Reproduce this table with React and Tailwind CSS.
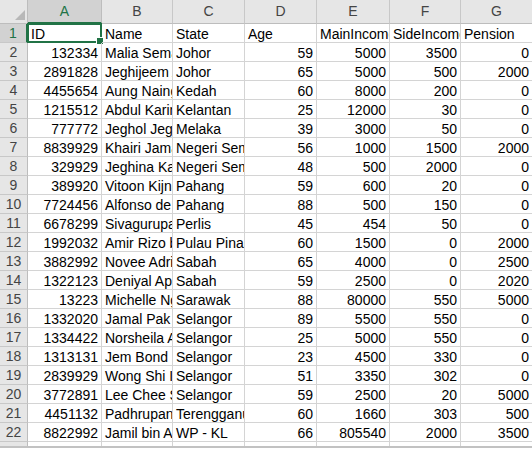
import React from "react";

// Sheet data, row 1 is the header row of the table
const rows = [
  ["ID", "Name", "State", "Age", "MainIncome", "SideIncome", "Pension"],
  [132334, "Malia Semaun", "Johor", 59, 5000, 3500, 0],
  [2891828, "Jeghijeem Ali", "Johor", 65, 5000, 500, 2000],
  [4455654, "Aung Naing Oo", "Kedah", 60, 8000, 200, 0],
  [1215512, "Abdul Karim", "Kelantan", 25, 12000, 30, 0],
  [777772, "Jeghol Jeghol", "Melaka", 39, 3000, 50, 0],
  [8839929, "Khairi Jamal", "Negeri Sembilan", 56, 1000, 1500, 2000],
  [329929, "Jeghina Kassim", "Negeri Sembilan", 48, 500, 2000, 0],
  [389920, "Vitoon Kijnan", "Pahang", 59, 600, 20, 0],
  [7724456, "Alfonso de Silva", "Pahang", 88, 500, 150, 0],
  [6678299, "Sivagurupan", "Perlis", 45, 454, 50, 0],
  [1992032, "Amir Rizo bin", "Pulau Pinang", 60, 1500, 0, 2000],
  [3882992, "Novee Adrian", "Sabah", 65, 4000, 0, 2500],
  [1322123, "Deniyal Aprin", "Sabah", 59, 2500, 0, 2020],
  [13223, "Michelle Ng", "Sarawak", 88, 80000, 550, 5000],
  [1332020, "Jamal Pak Ali", "Selangor", 89, 5500, 550, 0],
  [1334422, "Norsheila Ahmad", "Selangor", 25, 5000, 550, 0],
  [1313131, "Jem Bond Lee", "Selangor", 23, 4500, 330, 0],
  [2839929, "Wong Shi Ing", "Selangor", 51, 3350, 302, 0],
  [3772891, "Lee Chee Siong", "Selangor", 59, 2500, 20, 5000],
  [4451132, "Padhrupan Raj", "Terengganu", 60, 1660, 303, 500],
  [8822992, "Jamil bin Ali", "WP - KL", 66, 805540, 2000, 3500],
];

const letters = ["A", "B", "C", "D", "E", "F", "G", "H"];

const Cell = ({ value, active }) => {
  const isNum = typeof value === "number";
  return (
    <div className="relative h-[19px] border-r border-b border-[#d4d4d4]">
      <div
        className={`h-full overflow-hidden whitespace-nowrap leading-[20px] ${
          isNum ? "text-right pr-[3px]" : "text-left pl-[3px]"
        }`}
      >
        {value}
      </div>
      {active && (
        <div className="absolute -left-[1px] -top-[1px] -right-[1px] -bottom-[1px] border-2 border-[#217346] pointer-events-none">
          <div className="absolute -right-[4px] -bottom-[4px] w-[6px] h-[6px] bg-[#217346] border border-white box-content" />
        </div>
      )}
    </div>
  );
};

export default function App() {
  return (
    <div
      className="w-[532px] h-[450px] overflow-hidden bg-white text-black text-[14px]"
      style={{ fontFamily: '"Liberation Sans", Arial, sans-serif' }}
    >
      <div className="grid grid-cols-[28px_74px_71px_72px_72px_73px_71px_72px_80px] w-[613px]">
        {/* Corner */}
        <div className="relative h-[24px] bg-[#e6e6e6] border-r border-b border-[#bdbdbd]">
          <svg className="absolute right-[2px] bottom-[3px]" width="10" height="10" viewBox="0 0 10 10">
            <polygon points="10,0 10,10 0,10" fill="#b8b8b8" />
          </svg>
        </div>
        {/* Column headers */}
        {letters.map((l, i) =>
          i === 0 ? (
            <div
              key={l}
              className="h-[24px] bg-[#d2d2d2] border-r border-[#bdbdbd] border-b-2 border-b-[#217346] text-[#217346] flex items-center justify-center pt-[1px]"
            >
              {l}
            </div>
          ) : (
            <div
              key={l}
              className="h-[24px] bg-[#e6e6e6] border-r border-b border-[#c8c8c8] border-b-[#bdbdbd] text-[#444] flex items-center justify-center"
            >
              {l}
            </div>
          )
        )}

        {rows.map((row, r) => (
          <React.Fragment key={r}>
            {r === 0 ? (
              <div className="h-[19px] bg-[#d2d2d2] border-b border-[#c8c8c8] border-r-2 border-r-[#217346] text-[#217346] flex items-center justify-center leading-[20px]">
                {r + 1}
              </div>
            ) : (
              <div className="h-[19px] bg-[#e6e6e6] border-b border-[#c8c8c8] border-r border-r-[#bdbdbd] text-[#444] flex items-center justify-center leading-[20px]">
                {r + 1}
              </div>
            )}
            {row.map((v, c) => (
              <Cell key={c} value={v} active={r === 0 && c === 0} />
            ))}
            <Cell value="" />
          </React.Fragment>
        ))}

        {/* Partially visible row 23 */}
        <div className="h-[4px] bg-[#e6e6e6] border-r border-[#bdbdbd]" />
        {letters.map((l) => (
          <div key={l} className="h-[4px] border-r border-[#d4d4d4]" />
        ))}
      </div>
      <div className="h-[2px] bg-[#c2c2c2]" />
    </div>
  );
}
